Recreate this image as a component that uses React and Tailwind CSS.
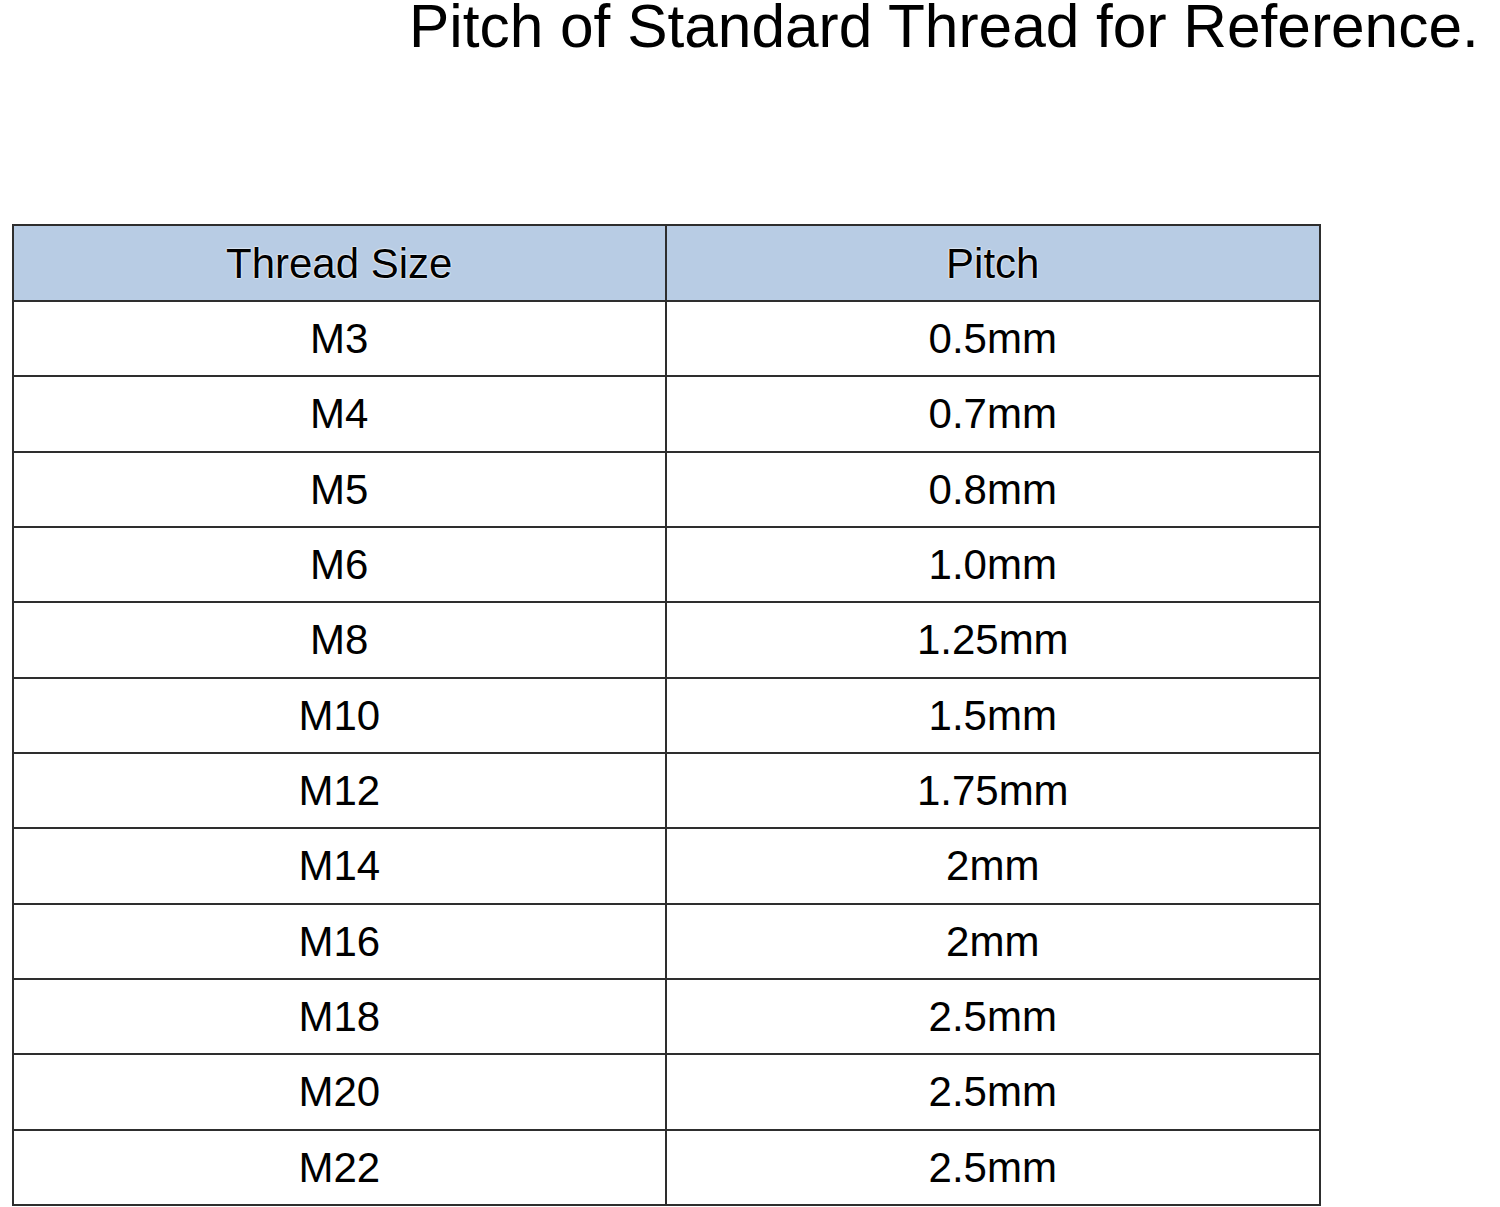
const rows = [
  ["M3", "0.5mm"],
  ["M4", "0.7mm"],
  ["M5", "0.8mm"],
  ["M6", "1.0mm"],
  ["M8", "1.25mm"],
  ["M10", "1.5mm"],
  ["M12", "1.75mm"],
  ["M14", "2mm"],
  ["M16", "2mm"],
  ["M18", "2.5mm"],
  ["M20", "2.5mm"],
  ["M22", "2.5mm"],
];

export default function App() {
  return (
    <div className="h-[1207px] w-[1500px] overflow-hidden bg-white font-['Liberation_Sans',Arial,sans-serif] text-black">
      <h1 className="pl-[409px] text-[60.4px] leading-[52px] whitespace-nowrap">
        Pitch of Standard Thread for Reference.
      </h1>

      <div className="ml-[12px] mt-[172px] w-[1309px] border-2 border-[#2e2e2e]">
        <div className="grid h-[74px] grid-cols-2 bg-[#b8cce4] text-[42px] [text-shadow:0_0_2px_#fff,0_0_2px_#fff]">
          <div className="flex items-center justify-center border-r-2 border-[#2e2e2e]">
            Thread Size
          </div>
          <div className="flex items-center justify-center">Pitch</div>
        </div>

        {rows.map(([size, pitch]) => (
          <div
            key={size}
            className="grid h-[75.33px] grid-cols-2 border-t-2 border-[#2e2e2e] text-[42px]"
          >
            <div className="flex items-center justify-center border-r-2 border-[#2e2e2e]">
              {size}
            </div>
            <div className="flex items-center justify-center">{pitch}</div>
          </div>
        ))}
      </div>
    </div>
  );
}
